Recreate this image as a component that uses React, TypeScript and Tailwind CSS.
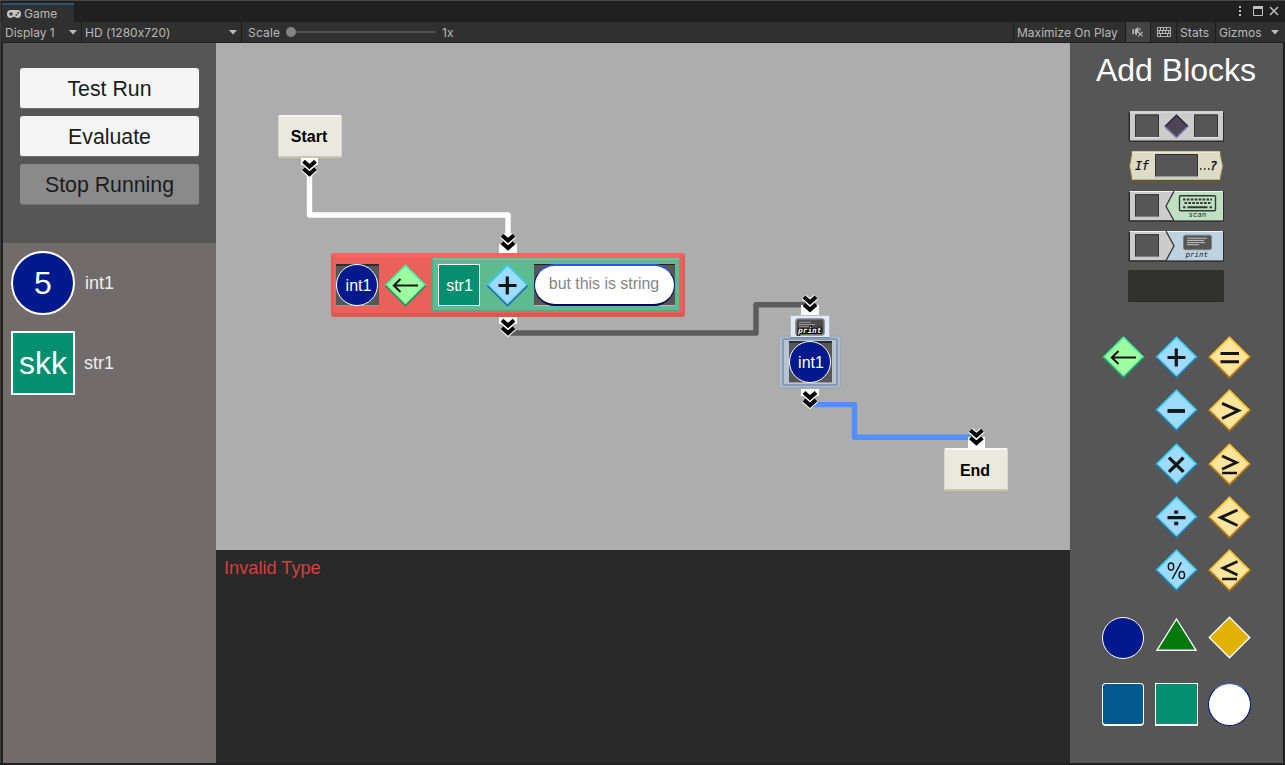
import React from "react";

const SANS = "font-['Liberation_Sans',Arial,sans-serif]";

/* ---------- editor chrome icons ---------- */

function GamepadIcon() {
  return (
    <svg width="14" height="8" viewBox="0 0 14 8" className="block shrink-0">
      <path fillRule="evenodd" fill="#c4c4c4" d="M3.8 0H10.2A3.8 4 0 0 1 10.2 8C8.9 8 8.6 6.7 7.8 6.7H6.2C5.4 6.7 5.1 8 3.8 8A3.8 4 0 0 1 3.8 0Z" />
      <path d="M2 3.9H6M4 1.9V5.9" stroke="#303030" strokeWidth="1.2" />
      <circle cx="9.4" cy="4.9" r="0.9" fill="#303030" />
      <circle cx="11.3" cy="2.9" r="0.9" fill="#303030" />
    </svg>
  );
}

function Caret() {
  return (
    <svg width="8" height="5" viewBox="0 0 8 5" className="block shrink-0">
      <path d="M0 0H8L4 4.6Z" fill="#bcbcbc" />
    </svg>
  );
}

function MutedIcon() {
  return (
    <svg width="12" height="11" viewBox="0 0 12 11" className="block">
      <path d="M0.4 2.2H2V7H0.4ZM3 2.2L6.4 0V5L4.8 6.4L5 8.6L3 7Z" fill="#bdbdbd" />
      <path d="M8 1V4" stroke="#bdbdbd" />
      <path d="M6.2 4.8L10.6 9.4M10.6 4.8L6.2 9.4" stroke="#bdbdbd" strokeWidth="1.1" />
    </svg>
  );
}

function KeyboardIcon() {
  return (
    <svg width="14" height="10" viewBox="0 0 14 10" className="block">
      <path
        d="M0.5 0.5H13.5V9.5H0.5ZM0.5 3.5H13.5M0.5 6.5H13.5M3.5 0.5V3.5M6.5 0.5V3.5M9.5 0.5V3.5M2.5 3.5V6.5M5.5 3.5V6.5M8.5 3.5V6.5M11.5 3.5V6.5M3.5 6.5V9.5M10.5 6.5V9.5"
        fill="none"
        stroke="#c0c0c0"
        strokeWidth="0.9"
      />
    </svg>
  );
}

function TabBar() {
  return (
    <div className="flex h-[21px] justify-between bg-[#202020] pl-px">
      <div className="mt-[2px] flex h-[19px] w-[72px] items-center gap-[3px] border-t-2 border-[#2b5277] bg-[#303030] pl-[5px] text-[12px]">
        <GamepadIcon />
        <span className="mt-px">Game</span>
      </div>
      <svg width="48" height="21" viewBox="1237 1 48 21" className="block">
        <path d="M1239 6H1241V8H1239ZM1239 10H1241V12H1239ZM1239 14H1241V16H1239Z" fill="#c0c0c0" />
        <path d="M1253.5 6.5H1262.5V15.5H1253.5Z" fill="none" stroke="#c0c0c0" />
        <path d="M1253 6H1263V9H1253Z" fill="#c0c0c0" />
        <path d="M1270 7L1278 15M1278 7L1270 15" stroke="#c0c0c0" strokeWidth="1.5" />
      </svg>
    </div>
  );
}

function Toolbar() {
  return (
    <div className="flex h-5 items-stretch bg-[#303030] pl-1 text-[12px] leading-[22px]">
      <div className="flex w-[77px] items-center justify-between border-r border-[#1c1c1c] pr-[4px]">
        <span className="pt-px">Display 1</span>
        <Caret />
      </div>
      <div className="flex w-[160px] items-center justify-between border-r border-[#1c1c1c] pr-[4px] pl-[3px]">
        <span className="pt-px tracking-[0.02px] [font-feature-settings:'calt'_0]">HD (1280x720)</span>
        <Caret />
      </div>
      <div className="flex items-center pl-[6px]">
        <span className="w-[38px] pt-px tracking-[0.2px]">Scale</span>
        <span className="h-[10px] w-[10px] rounded-full bg-[#848484]" />
        <span className="h-[2px] w-[140px] bg-[#505050]" />
        <span className="ml-[6px] pt-px [font-feature-settings:'calt'_0]">1x</span>
      </div>
      <div className="ml-auto flex items-stretch">
        <div className="w-[112px] border-l border-[#1c1c1c] pl-[3px] whitespace-nowrap">Maximize On Play</div>
        <div className="flex w-[26px] items-center justify-center border-x border-[#1c1c1c] bg-[#434343]">
          <MutedIcon />
        </div>
        <div className="flex w-[25px] items-center justify-center">
          <KeyboardIcon />
        </div>
        <div className="w-[39px] border-l border-[#1c1c1c] pl-[3px] tracking-[0.1px]">Stats</div>
        <div className="w-[51px] border-l border-[#1c1c1c] pl-[3px]">Gizmos</div>
        <div className="flex w-[19px] items-center pl-[5px]">
          <Caret />
        </div>
      </div>
    </div>
  );
}

/* ---------- operators ---------- */

type Tone = "green" | "blue" | "yellow";

const TONES: Record<Tone, { fill: string; light: string; dark: string; inner: string }> = {
  green: { fill: "#9dfda1", light: "#38efa0", dark: "#0f8a58", inner: "#7fe796" },
  blue: { fill: "#9ddcff", light: "#28d0f5", dark: "#0f6e9a", inner: "#7cc3ea" },
  yellow: { fill: "#ffe49b", light: "#f9bd1c", dark: "#a06a06", inner: "#efcf80" },
};

function Operator({ tone, glyph }: { tone: Tone; glyph: string }) {
  const t = TONES[tone];
  return (
    <svg width="43" height="43" viewBox="0 0 43 43" className="block shrink-0">
      <path d="M21.5 0.5L42.5 21.5L21.5 42.5L0.5 21.5Z" fill={t.fill} />
      <path d="M3 21.5L21.5 40L40 21.5" fill="none" stroke={t.inner} strokeWidth="1.6" />
      <path d="M1.2 21.5L21.5 1.2L41.8 21.5" fill="none" stroke={t.light} strokeWidth="1.5" />
      <path d="M1.2 21.5L21.5 41.8L41.8 21.5" fill="none" stroke={t.dark} strokeWidth="1.5" />
      {GLYPHS[glyph]}
    </svg>
  );
}

const ink = "#161616";

const GLYPHS: Record<string, React.ReactNode> = {
  assign: <path d="M34 21.5H10M16.5 15L9.8 21.5L16.5 28" fill="none" stroke={ink} strokeWidth="2" />,
  plus: <path d="M12.5 21.5H30.5M21.3 12.5V30.5" stroke={ink} strokeWidth="3.2" />,
  minus: <path d="M12.5 22H30" stroke={ink} strokeWidth="3.8" />,
  times: <path d="M14 14.6L28.5 28.9M28.5 14.6L14 28.9" stroke={ink} strokeWidth="3.4" />,
  divide: <path d="M12.5 21.6H30.5M19.2 16.1H23.2M19.2 27.5H23.2" stroke={ink} strokeWidth="3.4" />,
  mod: (
    <g fill="none" stroke={ink} strokeWidth="1.5">
      <ellipse cx="16" cy="17.6" rx="2.7" ry="3.6" />
      <ellipse cx="26.8" cy="26" rx="2.7" ry="3.6" />
      <path d="M26.3 13.4L17.2 30" />
    </g>
  ),
  eq: <path d="M12.5 17.5H31M12.5 25.8H31" stroke={ink} strokeWidth="3" />,
  gt: <path d="M14 14.3L30.5 21.6L14 29.5" fill="none" stroke={ink} strokeWidth="3" />,
  ge: <path d="M14 13L28.5 19.5L14 26.2M14 30H29" fill="none" stroke={ink} strokeWidth="2.7" />,
  lt: <path d="M29.5 14L12.6 21.6L29.5 29.5" fill="none" stroke={ink} strokeWidth="3" />,
  le: <path d="M29.5 12.5L15 19L29.5 26M14 30H29" fill="none" stroke={ink} strokeWidth="2.7" />,
};

/* ---------- palette blocks ---------- */

function Slot({ x, w = 24 }: { x: number; w?: number }) {
  return (
    <g>
      <path d={`M${x} 3.5H${x + w}V27H${x}Z`} fill="#565656" />
      <path d={`M${x + 0.5} 26V4H${x + w - 0.5}V26`} fill="none" stroke="#333333" />
      <path d={`M${x} 26.5H${x + w}`} stroke="#e6e6e6" />
    </g>
  );
}

function Plate({ fill }: { fill: string }) {
  return (
    <g>
      <rect x="0.5" y="0" width="95.5" height="31" rx="1.5" fill="#2a2b2d" />
      <rect x="2" y="0.5" width="93" height="29" fill={fill} />
      <path d="M1.5 0.8H95" stroke="#f4f4f4" />
    </g>
  );
}

function ExpressionBlock() {
  return (
    <svg width="96" height="32" viewBox="0 0 96 32" className="block">
      <Plate fill="#cccccc" />
      <Slot x={7} />
      <Slot x={66} />
      <path d="M48.5 3.5L60 15L48.5 27L36.5 15Z" fill="#4d4557" />
      <path d="M37 15.5L48.5 4L60 15.5" fill="none" stroke="#2c2534" strokeWidth="1.2" />
      <path d="M37 15.8L48.5 26.5L59.5 15.8" fill="none" stroke="#8b7ba4" strokeWidth="1.6" />
    </svg>
  );
}

function IfBlock() {
  return (
    <svg width="96" height="32" viewBox="0 0.5 96 32" className="block">
      <path d="M4 0.5H92Q93 8 95 15.5Q93 23 92 30.5H4Q3 23 1.5 15.5Q3 8 4 0.5Z" fill="#dddac6" stroke="#80713d" />
      <path d="M4 1.6H92" stroke="#f8f4df" />
      <path d="M4 30.2H92" stroke="#5f5426" strokeWidth="1.8" />
      <Slot x={27} w={43} />
      <text x="7" y="19.3" fontSize="12" fontStyle="italic" fontFamily="'DejaVu Sans Mono', monospace" fill="#0c0c0c" stroke="#0c0c0c" strokeWidth="0.2" textLength="14">If</text>
      <path d="M72 18.5H73.5M76 18.5H77.5M80 18.5H81.5" stroke="#111" strokeWidth="1.4" />
      <text x="82" y="19.3" fontSize="12" fontStyle="italic" fontFamily="'DejaVu Sans Mono', monospace" fill="#0c0c0c" stroke="#0c0c0c" strokeWidth="0.5">?</text>
    </svg>
  );
}

function ScanBlock() {
  return (
    <svg width="96" height="32" viewBox="0 0.3 96 32" className="block">
      <Plate fill="#cccccc" />
      <path d="M46 1.3H95V29.5H46L38 15.5Z" fill="#c1dfc3" />
      <path d="M46 0.5L38 15.5L46 30" fill="none" stroke="#333" strokeWidth="1.3" />
      <Slot x={7} />
      <rect x="51.5" y="5" width="36" height="15" rx="1" fill="none" stroke="#303a32" strokeWidth="1.4" />
      <path d="M55 8.8H84" stroke="#303a32" strokeWidth="2" strokeDasharray="2.6 1.3" />
      <path d="M56.5 12.3H83" stroke="#303a32" strokeWidth="2.2" strokeDasharray="2.6 1.3" />
      <path d="M55 16.5H57.5M59.5 16.5H79.5M81.5 16.5H84" stroke="#303a32" strokeWidth="2" />
      <text x="60.5" y="26.4" fontSize="7.3" fontStyle="italic" fontFamily="'DejaVu Sans Mono', monospace" fill="#1d2a1f">scan</text>
    </svg>
  );
}

function PrintBlock() {
  return (
    <svg width="96" height="32" viewBox="0 0.3 96 32" className="block">
      <Plate fill="#cccccc" />
      <path d="M38 1.3H95V29.5H38L46 15Z" fill="#bfd2df" />
      <path d="M38 0.5L46 15L38 30" fill="none" stroke="#333" strokeWidth="1.3" />
      <Slot x={7} />
      <rect x="55.5" y="4.5" width="28" height="14.5" rx="2" fill="#555" stroke="#7d8184" />
      <path d="M59 7.5H79M59 9.7H76M59 11.9H77M59 14H71" stroke="#cfcfcf" strokeWidth="0.9" />
      <text x="57.5" y="26" fontSize="7.5" fontStyle="italic" fontFamily="'DejaVu Sans Mono', monospace" fill="#1b2126">print</text>
    </svg>
  );
}

/* ---------- canvas ---------- */

function Chevrons({ x, y }: { x: number; y: number }) {
  const d = `M${x - 6} ${y + 1.3}L${x} ${y + 6.6}L${x + 6} ${y + 1.3}`;
  const e = `M${x - 6} ${y + 8.7}L${x} ${y + 14}L${x + 6} ${y + 8.7}`;
  return (
    <g fill="none">
      <path d={d + e} stroke="#ffffff" strokeWidth="6.2" />
      <path d={d + e} stroke="#050505" strokeWidth="4.1" />
    </g>
  );
}

function Wires() {
  return (
    <svg width="854" height="507" viewBox="216 43 854 507" className="absolute inset-0">
      <g fill="none" strokeWidth="5.4" strokeLinejoin="round">
        <path d="M309.5 170V215H508V240" stroke="#ffffff" />
        <path d="M508 333H756V304.8H806" stroke="#5c5c5c" />
        <path d="M812 404.6H854.5V437.2H974" stroke="#518fff" />
      </g>
      <path d="M301 157H318V165H301ZM499 244H517V254H499ZM499 316H517V324H499ZM801 305H819V316H801ZM801 388H819V396H801ZM968 437H985V449H968Z" fill="#ffffff" />
      <Chevrons x={309.5} y={160} />
      <Chevrons x={508} y={234} />
      <Chevrons x={508} y={319} />
      <Chevrons x={810} y={295.7} />
      <Chevrons x={810} y={391.2} />
      <Chevrons x={976.4} y={429} />
    </svg>
  );
}

function Terminal({ label, place }: { label: string; place: string }) {
  return (
    <div
      className={`absolute flex h-[43px] w-16 items-center justify-center rounded-[2px] border-x border-t-2 border-b-2 border-x-[#dcdaca] border-t-[#f8f7f4] border-b-[#c9c7ab] bg-[#e9e9df] text-[16px] font-bold text-black ${place}`}
    >
      {label}
    </div>
  );
}

function IntVar() {
  return (
    <div className="h-[42px] w-[43px] shrink-0 border-t-2 border-b border-[#2d2d2d] border-b-[#9a9a9a] bg-[#565656]">
      <div className="-mt-[2px] flex h-[42px] w-[42px] items-center justify-center rounded-full border border-white bg-[#001a8e] pt-[2px] pl-[3px] text-[16px] leading-none text-white">
        int1
      </div>
    </div>
  );
}

function AssignNode() {
  return (
    <div className="absolute top-[210px] left-[115px] flex h-16 w-[354px] items-center gap-[5px] rounded-[3px] border-x-2 border-t-4 border-b-4 border-x-[#e45a56] border-t-[#fa6361] border-b-[#d9574f] bg-[#eb605b] pl-[3px]">
      <IntVar />
      <Operator tone="green" glyph="assign" />
      <div className="flex h-[54px] w-[248px] shrink-0 items-center gap-[6px] border-x border-y-2 border-x-[#50aa82] border-t-[#65c99f] border-b-[#54a983] bg-[#5ebb91] pl-[5px]">
        <div className="flex h-[42px] w-[42px] shrink-0 items-center justify-center border border-white bg-[#048f6e] pt-px pl-px text-[16px] text-white">str1</div>
        <div className="w-[42px]">
          <Operator tone="blue" glyph="plus" />
        </div>
        <div className="h-[42px] w-[141px] shrink-0 border-t border-b border-t-[#222222] border-b-[#bbbbbb] bg-[#565656]">
          <div className="-mt-px flex h-[42px] w-[141px] items-center justify-center rounded-full border-2 border-x border-t-[#3156dc] border-r-[#001577] border-b-[#020b50] border-l-[#001577] bg-white pr-px pb-[2px] text-[15.9px] text-[#858585]">
            but this is string
          </div>
        </div>
      </div>
    </div>
  );
}

function PrintNode() {
  return (
    <div className="absolute top-[272px] left-[562px] w-16">
      <div className="relative z-10 mx-auto h-[23px] w-[40px] border border-[#b1bfd4] border-b-[#6f87ab] bg-[#e2eaf4]">
        <svg width="38" height="21" viewBox="0 0 38 21" className="block">
          <rect x="5" y="3" width="28" height="16" rx="2.5" fill="#4d4d4d" stroke="#808080" strokeWidth="1.5" />
          <path d="M8 6.3H20M8 8.5H24M8 10.7H22" stroke="#999" />
          <text
            x="7"
            y="17.4"
            fontSize="7.8"
            fontWeight="bold"
            fontStyle="italic"
            fontFamily="'DejaVu Sans Mono', monospace"
            fill="#ffffff"
            stroke="#000000"
            strokeWidth="2"
            paintOrder="stroke"
          >
            print
          </text>
        </svg>
      </div>
      <div className="-mt-[3px] h-[54px] rounded-[3px] border-2 border-[#9fadb3] bg-[#b1bdc9] px-[2px] py-px">
        <div className="flex h-[48px] justify-center rounded-[2px] border-2 border-[#8799b9] bg-[#b8c4d2] pt-px">
          <IntVar />
        </div>
      </div>
    </div>
  );
}

/* ---------- page ---------- */

const BUTTONS = [
  { label: "Test Run", tone: "bg-[#f5f5f5]" },
  { label: "Evaluate", tone: "bg-[#f5f5f5]" },
  { label: "Stop Running", tone: "bg-[#8a8a8a]" },
];

const OPERATORS: ([Tone, string] | null)[] = [
  ["green", "assign"], ["blue", "plus"], ["yellow", "eq"],
  null, ["blue", "minus"], ["yellow", "gt"],
  null, ["blue", "times"], ["yellow", "ge"],
  null, ["blue", "divide"], ["yellow", "lt"],
  null, ["blue", "mod"], ["yellow", "le"],
];

export default function App() {
  return (
    <div className="h-[765px] w-[1285px] overflow-hidden border-t border-[#484848] bg-[#202020] font-['Inter',sans-serif] text-[#b9b9b9]">
      <div className="border-l border-[#3c3c3c]">
        <TabBar />
        <Toolbar />
        <div className={`mt-px flex h-[720px] border-l-2 border-[#202020] ${SANS}`}>
          <aside className="flex w-[213px] shrink-0 flex-col">
            <div className="flex h-[200px] flex-col gap-[7px] bg-[#565656] pt-[25px] pl-[17px]">
              {BUTTONS.map((b) => (
                <button key={b.label} className={`h-[41px] w-[179px] rounded-[3px] border-b border-[#707070] pt-1 text-[21.3px] leading-none text-[#1b1b1b] ${b.tone}`}>
                  {b.label}
                </button>
              ))}
            </div>
            <div className="flex flex-1 flex-col gap-4 bg-[#716b6b] pt-2 pl-2 text-[18px] text-[#eeeeee]">
              <div className="flex items-center gap-[10px]">
                <span className="flex h-16 w-16 items-center justify-center rounded-full border-2 border-white bg-[#001a8e] text-[32px] text-white">5</span>
                <span>int1</span>
              </div>
              <div className="flex items-center gap-[9px]">
                <span className="flex h-16 w-16 items-center justify-center border-2 border-white bg-[#048f6e] text-[32px] text-white">skk</span>
                <span>str1</span>
              </div>
            </div>
          </aside>

          <main className="flex w-[854px] shrink-0 flex-col">
            <div className="relative h-[507px] bg-[#adadad]">
              <Wires />
              <Terminal label="Start" place="left-[62px] top-[72px] pr-0.5" />
              <AssignNode />
              <PrintNode />
              <Terminal label="End" place="left-[728px] top-[405px] pt-0.5 pr-0.5" />
            </div>
            <div className="flex-1 bg-[#292929] px-2 pt-[7px] text-[18.2px] leading-[22px] text-[#d93d40]">Invalid Type</div>
          </main>

          <aside className="flex w-[213px] shrink-0 flex-col items-center bg-[#565656]">
            <h1 className="mt-[9px] pr-px text-[32px] leading-[36px] text-white">Add Blocks</h1>
            <div className="mt-[23px] flex flex-col gap-2 pr-px">
              <ExpressionBlock />
              <IfBlock />
              <ScanBlock />
              <PrintBlock />
              <div className="-mt-px h-8 w-24 rounded-[2px] border-b border-[#262722] bg-[#31322e]" />
            </div>
            <div className="mt-[34px] grid grid-cols-3 gap-x-[10.3px] gap-y-[10.3px]">
              {OPERATORS.map((op, i) => (op ? <Operator key={i} tone={op[0]} glyph={op[1]} /> : <span key={i} />))}
            </div>
            <div className="mt-[24.3px] grid grid-cols-3 gap-x-[10.3px] gap-y-[23.5px]">
              <div className="mt-px h-[42px] w-[42px] rounded-full border-[1.5px] border-white bg-[#001a8e]" />
              <svg width="43" height="43" viewBox="0 0 43 43" className="block">
                <path d="M21.5 3L41 34.2H2Z" fill="#04780d" stroke="#ffffff" strokeWidth="1.4" />
              </svg>
              <svg width="43" height="43" viewBox="0 0 43 43" className="block">
                <path d="M21.5 1.2L41.8 21.5L21.5 41.8L1.2 21.5Z" fill="#e2b202" stroke="#ffffff" strokeWidth="1.3" />
              </svg>
              <div className="h-[43px] w-[42px] rounded-[4px] border border-b-2 border-white bg-[#035990]" />
              <div className="h-[43px] w-[43px] border border-b-2 border-white bg-[#048f6e]" />
              <div className="h-[43px] w-[43px] rounded-full border border-t-[#3156dc] border-r-[#001577] border-b-[#020b50] border-l-[#001577] bg-white" />
            </div>
          </aside>
        </div>
      </div>
    </div>
  );
}
